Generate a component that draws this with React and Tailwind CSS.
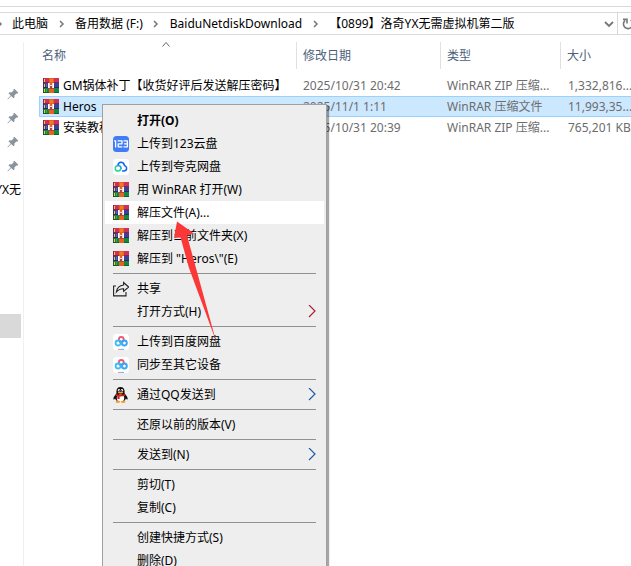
import clsx from "clsx";

const crumbs = ["此电脑", "备用数据 (F:)", "BaiduNetdiskDownload", "【0899】洛奇YX无需虚拟机第二版"];

const files = [
    { name: "GM锅体补丁【收货好评后发送解压密码】", date: "2025/10/31 20:42", type: "WinRAR ZIP 压缩...", size: "1,332,816..." },
    { name: "Heros", date: "2025/11/1 1:11", type: "WinRAR 压缩文件", size: "11,993,35...", selected: true },
    { name: "安装教程", date: "2025/10/31 20:39", type: "WinRAR ZIP 压缩...", size: "765,201 KB" },
];

const WinRarIcon = () => (
    <svg className="h-4 w-4 shrink-0" viewBox="0 0 16 16" shapeRendering="crispEdges">
        <rect y="0" width="16" height="5" fill="#cf2f58" />
        <rect y="5" width="16" height="5" fill="#3a4196" />
        <rect y="10" width="16" height="5" fill="#17883b" />
        <rect y="4" width="16" height="1" fill="#8f2048" />
        <rect y="9" width="16" height="1" fill="#232a66" />
        <rect y="14" width="16" height="1" fill="#0d6030" />
        <rect x="0" y="0" width="1" height="15" fill="#4a2338" opacity=".6" />
        <rect x="1" y="1" width="1" height="3" fill="#f5c83a" />
        <rect x="1" y="6" width="1" height="3" fill="#f5c83a" />
        <rect x="1" y="11" width="1" height="3" fill="#f5c83a" />
        <rect x="3" y="6" width="1" height="3" fill="#5666c4" />
        <rect x="3" y="11" width="1" height="3" fill="#35a857" />
        <rect x="6" y="0" width="5" height="15" fill="#e4641d" />
        <rect x="7" y="1" width="3" height="3" fill="#f07a2b" />
        <rect x="5" y="5" width="6" height="6" fill="#a5474a" />
        <rect x="5" y="5" width="1" height="5" fill="#fff" />
        <rect x="6" y="5" width="1" height="5" fill="#e9d5dc" />
        <rect x="9" y="5" width="1" height="5" fill="#e9d5dc" />
        <rect x="10" y="5" width="1" height="5" fill="#fff" />
        <rect x="7" y="5" width="2" height="2" fill="#e4641d" />
        <rect x="7" y="7" width="2" height="1" fill="#f6dfe0" />
    </svg>
);

const Pan123Icon = () => (
    <svg className="h-4 w-4" viewBox="0 0 16 16" fill="none">
        <rect width="16" height="16" rx="3.5" fill="#3f7cf6" />
        <path
            d="M1 4.8h1.6v6.7M4.6 4.8H9v3H5.2v3h4.1M10.5 4.8h3.9v6h-3.9M11 7.8h3.2"
            stroke="#fff"
            strokeWidth="1.3"
            strokeLinejoin="round"
        />
    </svg>
);

const QuarkIcon = () => (
    <svg className="h-4 w-4" viewBox="0 0 16 16" fill="none" strokeWidth="1.5" strokeLinecap="round">
        <rect width="16" height="16" rx="3.5" fill="#fff" />
        <path d="M4.8 6.6C5.1 4.5 6.4 3.2 8 3.2c1.8 0 3.2 1.4 3.5 3.4 1.4.5 2.2 1.5 2.1 2.8-.1 1.7-1.3 2.6-3 2.6H9.5" stroke="#1464f4" />
        <path d="M4.7 6.6C3.2 6.9 2.3 8 2.3 9.4c0 1.6 1.2 2.6 2.7 2.6 2.2 0 3-1.3 3-2.9" stroke="#25d695" />
        <path d="M4.9 6.6c2 .1 3.1 1.1 3.1 2.7" stroke="#2e9ed8" />
    </svg>
);

const BaiduIcon = () => (
    <svg className="h-4 w-4" viewBox="0 0 16 16" fill="none" strokeWidth="1.9">
        <rect width="16" height="16" rx="3.5" fill="#fff" />
        <circle cx="8.3" cy="5.4" r="2.4" stroke="#ef5871" />
        <circle cx="5.1" cy="9" r="2.5" stroke="#3cc0f2" />
        <circle cx="11.3" cy="9" r="2.5" stroke="#35a5f5" />
        <path d="m6.4 6.8 3.6 4" stroke="#3fb0f3" />
        <path d="M5 15.4h3" stroke="#f08497" strokeWidth="1" />
        <path d="M8 15.4h3" stroke="#58b9f4" strokeWidth="1" />
    </svg>
);

const ShareIcon = () => (
    <svg className="h-4 w-4" viewBox="0 0 16 16" fill="none" stroke="#222" strokeWidth="1.1">
        <path d="M3 5H.6v9.9H13V11" />
        <path d="M10.6 1.5 15.6 6l-5 4.3V7.7C7.2 7.6 5.2 8.7 3.4 11c.5-4 3.2-6.6 7.2-7Z" />
    </svg>
);

const QQIcon = () => (
    <svg className="h-4 w-4" viewBox="0 0 16 16">
        <path d="M7.5 0C4.8 0 3.4 2 3.4 4.5v2C1.8 8.2 0 10.6.4 12.2c.4.7 1.2.1 1.7-.6.3 1 .9 1.7 1.6 2.2h7.6c.7-.5 1.3-1.2 1.6-2.2.5.7 1.3 1.3 1.7.6.4-1.6-1.2-4-3-5.7v-2C11.6 2 10.2 0 7.5 0Z" fill="#111" />
        <ellipse cx="7.5" cy="11" rx="3.7" ry="3.5" fill="#fff" />
        <ellipse cx="6" cy="3.3" rx="1.1" ry="1.3" fill="#fff" />
        <ellipse cx="9" cy="3.3" rx="1.1" ry="1.3" fill="#fff" />
        <circle cx="6.3" cy="3.5" r=".5" />
        <circle cx="8.7" cy="3.5" r=".5" />
        <ellipse cx="7.5" cy="5.6" rx="2.8" ry=".9" fill="#fca51c" />
        <path d="M3.1 6.9c2.8 1.2 6 1.2 8.9 0l.6 1.7c-2 .9-4.1 1.1-6 1v2.3H4.4V9.2l-1.9-.7Z" fill="#e51b1b" />
        <path d="M2.6 14.6c.9-1.2 3.5-1.2 4.6 0 .1.9-.9 1.3-2.4 1.3s-2.4-.4-2.2-1.3ZM7.8 14.6c1.1-1.2 3.7-1.2 4.6 0 .2.9-.7 1.3-2.2 1.3s-2.5-.4-2.4-1.3Z" fill="#f79b18" />
    </svg>
);

const PinIcon = () => (
    <svg className="h-3 w-3" viewBox="0 0 12 12" fill="#8a949e">
        <path d="M7.3.8 11.3 4.8 10.3 5.7 9.4 5.4 7.4 7.5 7.5 9.3 6.5 10.3 4.2 8 1 11.2.5 11.3.6 10.8 3.7 7.5 1.5 5.3 2.5 4.3 4.4 4.5 6.6 2.5 6.3 1.7Z" />
    </svg>
);

const CrumbArrow = () => (
    <svg className="h-2 w-2 shrink-0" viewBox="0 0 8 8" fill="none" stroke="#777" strokeWidth="1.5">
        <path d="m2 1 3 3-3 3" />
    </svg>
);

const menu = [
    [
        { label: "打开(O)", bold: true },
        { label: "上传到123云盘", Icon: Pan123Icon },
        { label: "上传到夸克网盘", Icon: QuarkIcon },
        { label: "用 WinRAR 打开(W)", Icon: WinRarIcon },
        { label: "解压文件(A)...", Icon: WinRarIcon, active: true },
        { label: "解压到当前文件夹(X)", Icon: WinRarIcon },
        { label: '解压到 "Heros\\"(E)', Icon: WinRarIcon },
    ],
    [
        { label: "共享", Icon: ShareIcon },
        { label: "打开方式(H)", submenu: "#b02030" },
    ],
    [
        { label: "上传到百度网盘", Icon: BaiduIcon },
        { label: "同步至其它设备", Icon: BaiduIcon },
    ],
    [{ label: "通过QQ发送到", Icon: QQIcon, submenu: "#1f5fa8" }],
    [{ label: "还原以前的版本(V)" }],
    [{ label: "发送到(N)", submenu: "#1f5fa8" }],
    [{ label: "剪切(T)" }, { label: "复制(C)" }],
    [{ label: "创建快捷方式(S)" }, { label: "删除(D)" }],
];

const AddressBar = () => (
    <header className="pt-[6px]">
        <div className="h-[6px] border-t border-[#d9d9d9]" />
        <div className="flex h-[23px] items-center border-y border-[#d9d9d9]">
            <nav className="flex min-w-0 flex-1 items-center text-black">
                {crumbs.map((crumb, i) => (
                    <div key={crumb} className="flex items-center">
                        <span className={clsx("flex", i === 0 ? "w-3 justify-end pr-2" : "w-[27px] justify-center")}>
                            <CrumbArrow />
                        </span>
                        <a href="#">{crumb}</a>
                    </div>
                ))}
            </nav>
            <button aria-label="历史记录" className="flex w-4 items-center justify-center">
                <svg className="h-2 w-[10px]" viewBox="0 0 10 8" fill="none" stroke="#777" strokeWidth="1.8">
                    <path d="m1 2 4 4 4-4" />
                </svg>
            </button>
            <button aria-label="刷新" className="flex h-full w-[14px] items-center overflow-hidden border-l border-[#d9d9d9] pl-1">
                <svg className="h-3 w-3 shrink-0" viewBox="0 0 12 12" fill="none" stroke="#777" strokeWidth="1.6">
                    <path d="M8.6 2.2A4.6 4.6 0 1 1 3 2.6M1 1.400h4v4" />
                </svg>
            </button>
        </div>
    </header>
);

const Sidebar = () => (
    <aside className="mt-[7px] w-6 shrink-0 overflow-hidden border-r border-[#f0f0f0] pt-10 text-black">
        {[1, 2, 3, 4].map((n) => (
            <div key={n} className="flex h-6 items-center pl-[7px]">
                <PinIcon />
            </div>
        ))}
        <div className="flex h-6 justify-end pr-[2px]">
            <span className="whitespace-nowrap leading-6">YX无</span>
        </div>
        <div className="mr-[2px] mt-[112px] h-6 bg-[#d9d9d9]" />
    </aside>
);

const HeaderCell = ({ children, first }) => (
    <th className="relative h-10 p-0 pt-px text-left font-normal text-[#4c607a]">
        <div className={clsx("flex h-[27px] items-center", first ? "pl-[3px]" : "border-l border-[#e0e0e0] pl-[6px]")}>
            {children}
        </div>
        {first && (
            <svg className="absolute left-[123px] top-[7px] h-[5px] w-2" viewBox="0 0 8 5" fill="none" stroke="#666">
                <path d="m.5 4.5 3.5-4 3.5 4" />
            </svg>
        )}
    </th>
);

const FileTable = () => (
    <div className="min-w-0 flex-1 overflow-hidden pl-[15px]">
        <table className="w-full table-fixed border-separate border-spacing-0 whitespace-nowrap">
            <colgroup>
                <col className="w-[257px]" />
                <col className="w-36" />
                <col className="w-[120px]" />
                <col />
            </colgroup>
            <thead>
                <tr>
                    <HeaderCell first>名称</HeaderCell>
                    <HeaderCell>修改日期</HeaderCell>
                    <HeaderCell>类型</HeaderCell>
                    <HeaderCell>大小</HeaderCell>
                </tr>
            </thead>
            <tbody>
                {files.map((file) => (
                    <tr
                        key={file.name}
                        className={clsx(
                            "h-[21px] text-[#6d6d6d] [&>td]:border-y [&>td]:py-0",
                            file.selected ? "bg-[#cce8ff] [&>td]:border-[#99d1ff]" : "[&>td]:border-transparent"
                        )}
                    >
                        <td className="border-l pl-[3px]">
                            <span className="flex h-[19px] items-center gap-1 text-black">
                                <WinRarIcon />
                                {file.name}
                            </span>
                        </td>
                        <td className="pl-[7px]">{file.date}</td>
                        <td className="pl-[7px]">{file.type}</td>
                        <td className="pl-2">{file.size}</td>
                    </tr>
                ))}
            </tbody>
        </table>
    </div>
);

const MenuItem = ({ label, Icon, bold, active, submenu }) => (
    <button
        role="menuitem"
        className={clsx("flex h-[23px] w-full items-center pl-2 pr-2 text-left", active && "bg-white", bold && "font-bold")}
    >
        <span className="mr-2 flex w-4 shrink-0">{Icon && <Icon />}</span>
        <span className="flex-1 whitespace-nowrap">{label}</span>
        {submenu && (
            <svg className="h-[14px] w-2" viewBox="0 0 8 14" fill="none" stroke={submenu} strokeWidth="1.2">
                <path d="m1 0 6 6-6 6" />
            </svg>
        )}
    </button>
);

const ContextMenu = () => (
    <div
        role="menu"
        className="absolute left-[102px] top-[104px] w-[225px] border border-[#a0a0a0] bg-[#eeeeee] px-[2px] py-1 text-black shadow-[2px_2px_1px_rgba(0,0,0,0.35)]"
    >
        {menu.map((group, i) => (
            <div key={i}>
                {i > 0 && <hr className="mx-2 my-[3px] border-t border-[#919191]" />}
                {group.map((item) => (
                    <MenuItem key={item.label} {...item} />
                ))}
            </div>
        ))}
    </div>
);

const App = () => (
    <div className="relative flex h-screen flex-col overflow-hidden bg-white font-['Noto_Sans','Noto_Sans_CJK_SC',sans-serif] text-[12px] leading-4">
        <AddressBar />
        <main className="flex min-h-0 flex-1">
            <Sidebar />
            <FileTable />
        </main>
        <ContextMenu />
        <svg className="pointer-events-none absolute left-[170px] top-[216px] h-[130px] w-[50px]" viewBox="0 0 50 130" fill="#fb3838">
            <path d="M7 5.5 4 22 10.5 21.5 19 52 46 125 26.5 54 17 19.5 24 17.5Z" />
        </svg>
    </div>
);

export default App;
